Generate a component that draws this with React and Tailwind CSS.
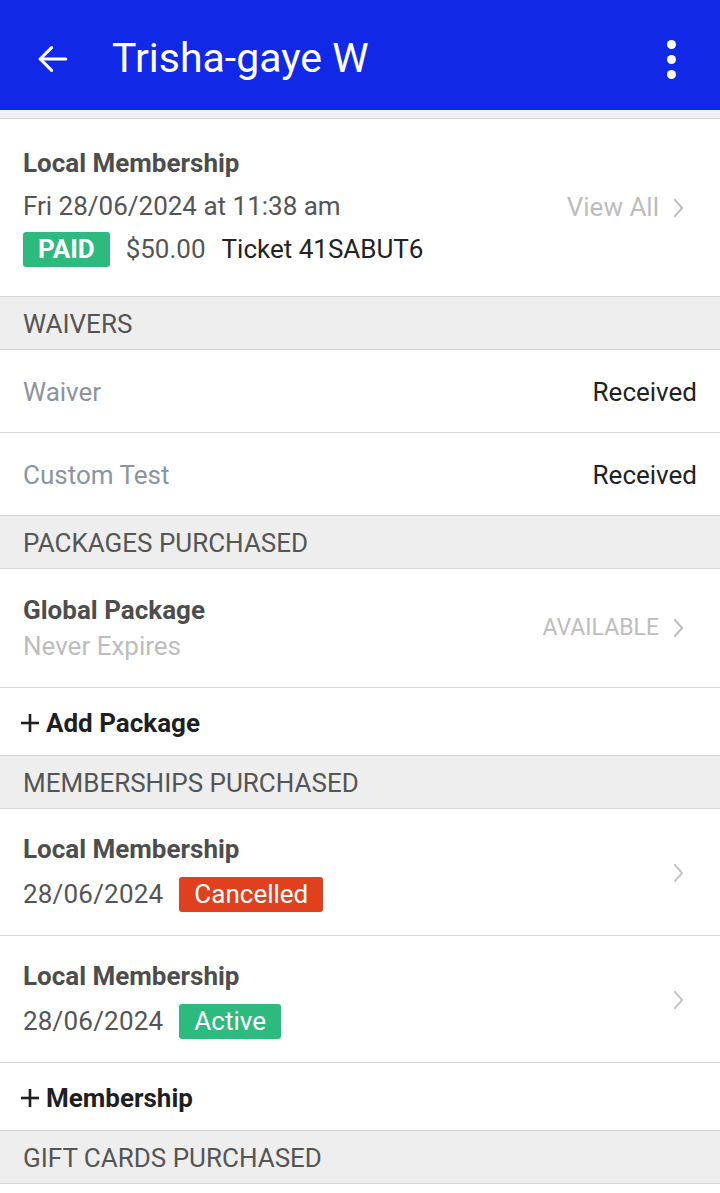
import React from "react";

const Chevron = ({ className = "" }) => (
  <svg viewBox="0 0 12 22" className={className} fill="none" stroke="currentColor" strokeWidth="2.2" strokeLinecap="round" strokeLinejoin="round">
    <polyline points="2,2 10,11 2,20" />
  </svg>
);

const Plus = () => (
  <svg viewBox="0 0 20 20" className="w-[20px] h-[20px]" fill="none" stroke="#1f1f1f" strokeWidth="2.6">
    <line x1="10" y1="1" x2="10" y2="19" />
    <line x1="1" y1="10" x2="19" y2="10" />
  </svg>
);

const SectionHeader = ({ children }) => (
  <div className="h-[53px] flex items-center pt-[3px] px-[23px] bg-[#eeeeee] border-b border-[#d4d4d4] text-[26px] text-[#555555] uppercase">
    {children}
  </div>
);

const WaiverRow = ({ label, value }) => (
  <div className="h-[83px] flex items-center justify-between pt-[3px] px-[23px] border-b border-[#d4d4d4] text-[26px]">
    <span className="text-[#8b959d]">{label}</span>
    <span className="text-[#222222]">{value}</span>
  </div>
);

const AddRow = ({ label, height }) => (
  <div className={`${height} flex items-center pt-[3px] pl-[20px] border-b border-[#d4d4d4]`}>
    <Plus />
    <span className="ml-[6px] text-[26px] font-bold text-[#1f1f1f]">{label}</span>
  </div>
);

const MembershipRow = ({ status }) => (
  <div className="h-[127px] flex items-center justify-between pt-[2px] pl-[23px] pr-[36px] border-b border-[#d4d4d4]">
    <div className="flex flex-col">
      <span className="text-[26px] leading-[32px] font-bold text-[#4d4d4d]">Local Membership</span>
      <div className="mt-[10px] flex items-center">
        <span className="text-[26px] text-[#555555] tracking-[0.2px]">28/06/2024</span>
        <span
          className={
            status === "Cancelled"
              ? "ml-[16px] h-[35px] px-[15px] flex items-center rounded-[3px] bg-[#e0401d] text-white text-[26px]"
              : "ml-[16px] h-[35px] px-[15px] flex items-center rounded-[3px] bg-[#2dba7f] text-white text-[26px]"
          }
        >
          {status}
        </span>
      </div>
    </div>
    <Chevron className="w-[11px] h-[20px] text-[#c4c4c4]" />
  </div>
);

export default function App() {
  return (
    <div className="w-[720px] min-h-[1193px] bg-white font-['Roboto',sans-serif]">
      {/* header */}
      <div className="h-[110px] bg-[#1129e6] flex items-center pt-[8px] text-white">
        <svg viewBox="0 0 24 24" className="ml-[36px] w-[34px] h-[34px]" fill="none" stroke="white" strokeWidth="2.2" strokeLinecap="round" strokeLinejoin="round">
          <line x1="21" y1="12" x2="3" y2="12" />
          <polyline points="11,4 3,12 11,20" />
        </svg>
        <span className="ml-[42px] text-[41px] flex-1">Trisha-gaye W</span>
        <div className="mr-[44px] flex flex-col gap-[6px]">
          <span className="w-[9px] h-[9px] rounded-full bg-white" />
          <span className="w-[9px] h-[9px] rounded-full bg-white" />
          <span className="w-[9px] h-[9px] rounded-full bg-white" />
        </div>
      </div>
      <div className="h-[9px] bg-[#eef0f5] border-b border-[#d8d8d0]" />

      {/* summary card */}
      <div className="h-[178px] flex items-center justify-between pl-[23px] pr-[36px] border-b border-[#d4d4d4]">
        <div className="flex flex-col">
          <span className="text-[26px] leading-[32px] font-bold text-[#4d4d4d]">Local Membership</span>
          <span className="mt-[11px] text-[26px] leading-[32px] text-[#555555]">Fri 28/06/2024 at 11:38 am</span>
          <div className="mt-[8px] flex items-center">
            <span className="h-[35px] px-[15px] flex items-center rounded-[3px] bg-[#2dba7f] text-white text-[26px] font-bold">PAID</span>
            <span className="ml-[16px] text-[26px] text-[#555555]">$50.00</span>
            <span className="ml-[16px] text-[26px] text-[#222222]">Ticket 41SABUT6</span>
          </div>
        </div>
        <div className="flex items-center gap-[14px] text-[#bdbdbd]">
          <span className="text-[26px]">View All</span>
          <Chevron className="w-[11px] h-[20px]" />
        </div>
      </div>

      <SectionHeader>Waivers</SectionHeader>
      <WaiverRow label="Waiver" value="Received" />
      <WaiverRow label="Custom Test" value="Received" />

      <SectionHeader>Packages Purchased</SectionHeader>
      <div className="h-[119px] flex items-center justify-between pl-[23px] pr-[36px] border-b border-[#d4d4d4]">
        <div className="flex flex-col">
          <span className="text-[26px] leading-[32px] font-bold text-[#4d4d4d]">Global Package</span>
          <span className="mt-[4px] text-[26px] leading-[32px] text-[#bdbdbd]">Never Expires</span>
        </div>
        <div className="flex items-center gap-[14px] text-[#bdbdbd]">
          <span className="text-[23px]">AVAILABLE</span>
          <Chevron className="w-[11px] h-[20px]" />
        </div>
      </div>
      <AddRow label="Add Package" height="h-[68px]" />

      <SectionHeader>Memberships Purchased</SectionHeader>
      <MembershipRow status="Cancelled" />
      <MembershipRow status="Active" />
      <AddRow label="Membership" height="h-[68px]" />

      <SectionHeader>Gift Cards Purchased</SectionHeader>
    </div>
  );
}
